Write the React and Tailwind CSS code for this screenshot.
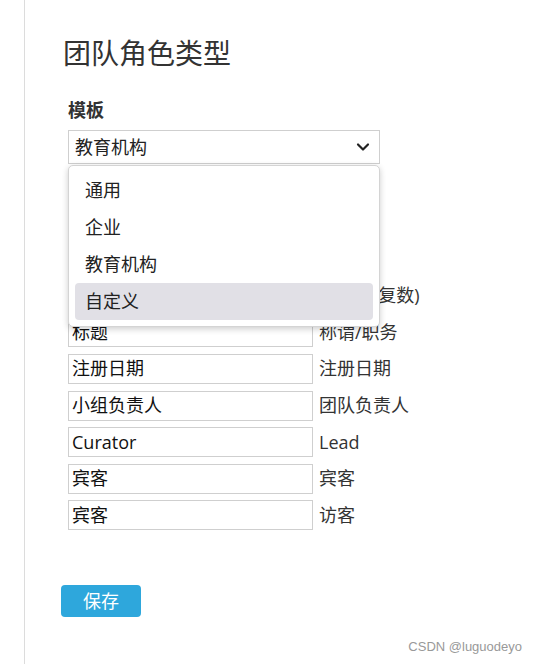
import React from 'react';

const font = { fontFamily: '"Open Sans", "Noto Sans CJK SC", sans-serif' };

// first rows sit under the open dropdown
const rows = [
  ['', '成员'],
  ['', '成员'],
  ['', '职位'],
  ['', '成员们(复数)'],
  ['标题', '称谓/职务'],
  ['注册日期', '注册日期'],
  ['小组负责人', '团队负责人'],
  ['Curator', 'Lead'],
  ['宾客', '宾客'],
  ['宾客', '访客'],
];

const options = ['通用', '企业', '教育机构', '自定义'];

function Chevron() {
  return (
    <svg width="14" height="10" viewBox="0 0 14 10" className="text-[#222]">
      <path d="M2 2.5 L7 7.5 L12 2.5" fill="none" stroke="currentColor" strokeWidth="2.2" strokeLinecap="round" strokeLinejoin="round" />
    </svg>
  );
}

export default function App() {
  return (
    <div className="relative flex min-h-[664px] bg-white text-[#333]" style={font}>
      <div className="w-[25px] shrink-0 border-r border-[#dcdcdc]" />
      <div className="flex flex-col pl-[38px] pt-[34px]">
        <h1 className="text-[28px] leading-[38px] font-normal text-[#333]">团队角色类型</h1>

        <div className="mt-[26px] ml-[5px] flex flex-col">
          <label className="text-[18px] leading-[24px] font-bold text-[#333]">模板</label>

          <div className="relative mt-[8px] w-[312px]">
            <div className="flex h-[34px] items-center justify-between border border-[#cfcfcf] bg-white pl-[6px] pr-[9px]">
              <span className="text-[18px] text-[#222]">教育机构</span>
              <Chevron />
            </div>

            <div className="absolute left-0 top-[35px] z-10 w-[312px] rounded-[5px] border border-[#d4d4d4] bg-white py-[6px] px-[6px] shadow-[0_2px_6px_rgba(0,0,0,0.2)]">
              {options.map((o, i) => (
                <div
                  key={o}
                  className={
                    'flex h-[37px] items-center rounded-[4px] pl-[10px] text-[18px] text-[#222] ' +
                    (i === 3 ? 'bg-[#e1e0e6]' : '')
                  }
                >
                  {o}
                </div>
              ))}
            </div>
          </div>

          <div className="mt-[7px] flex flex-col gap-[6.6px]">
            {rows.map(([v, l], i) => (
              <div key={i} className="flex items-center gap-[6px]">
                <div className="flex h-[30px] w-[245px] items-center border border-[#cfcfcf] bg-white px-[3px] text-[18px] text-[#111]">
                  {v}
                </div>
                <span className="text-[18px] text-[#333]">{l}</span>
              </div>
            ))}
          </div>

          <button className="mt-[55px] -ml-[7px] flex h-[32px] w-[80px] items-center justify-center rounded-[4px] bg-[#2ea7dc] text-[18px] text-white">
            保存
          </button>
        </div>
      </div>

      <div
        className="absolute right-[15px] bottom-[8px] text-[13px] text-[#999]"
        style={{ fontFamily: '"Liberation Sans", Arial, sans-serif' }}
      >
        CSDN @luguodeyo
      </div>
    </div>
  );
}
